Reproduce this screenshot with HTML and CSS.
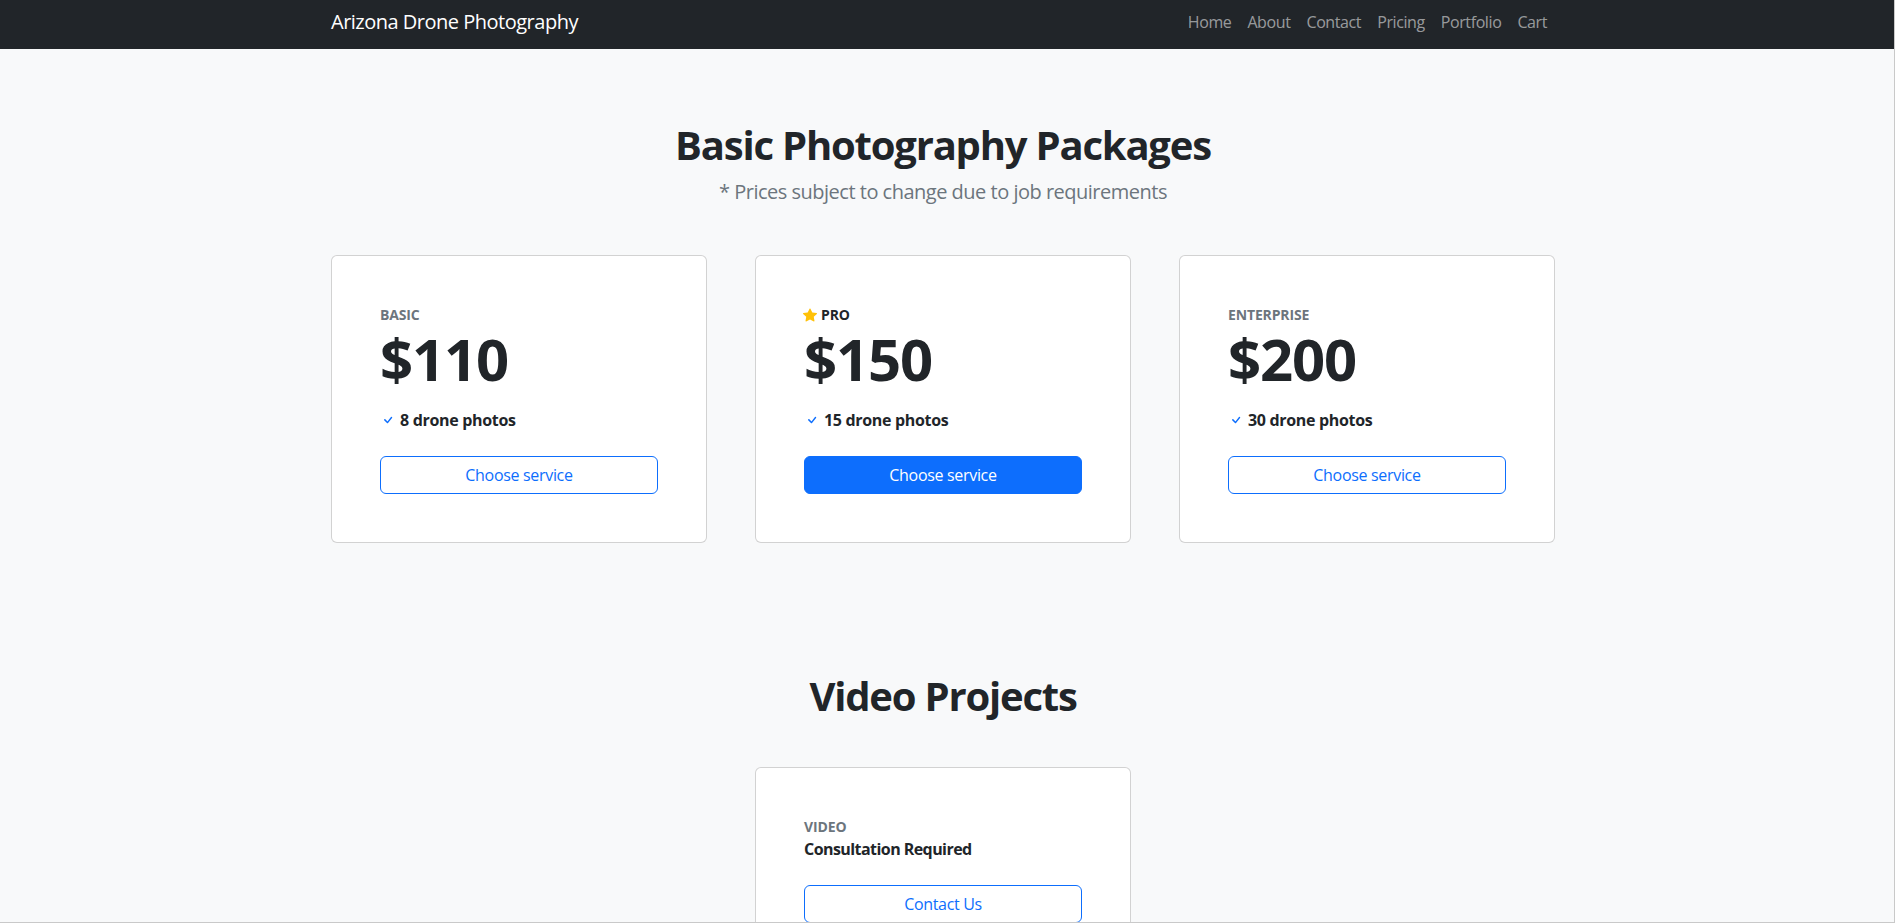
FILE: index.html
```html
<!DOCTYPE html>
<html lang="en">
<head>
<meta charset="utf-8">
<title>Arizona Drone Photography - Pricing</title>
<link rel="stylesheet" href="styles.css">
</head>
<body>
<nav class="navbar">
  <div class="container nav-inner">
    <a class="brand" href="#">Arizona Drone Photography</a>
    <ul class="nav-links">
      <li><a href="#">Home</a></li>
      <li><a href="#">About</a></li>
      <li><a href="#">Contact</a></li>
      <li><a href="#">Pricing</a></li>
      <li><a href="#">Portfolio</a></li>
      <li><a href="#">Cart</a></li>
    </ul>
  </div>
</nav>
<main>
  <section class="section pricing">
    <div class="container">
      <header class="section-head">
        <h1 class="section-title">Basic Photography Packages</h1>
        <p class="lead">* Prices subject to change due to job requirements</p>
      </header>
      <div class="card-grid">
        <div class="card">
          <div class="tier">Basic</div>
          <div class="price">$110</div>
          <div class="feature"><svg class="check" viewBox="0 0 16 16" width="16" height="16"><path d="M10.97 4.97a.75.75 0 0 1 1.07 1.05l-3.99 4.99a.75.75 0 0 1-1.08.02L4.324 8.384a.75.75 0 1 1 1.06-1.06l2.094 2.093 3.473-4.425z"/></svg><span>8 drone photos</span></div>
          <a class="btn btn-outline" href="#">Choose service</a>
        </div>
        <div class="card">
          <div class="tier tier-pro"><svg class="star" viewBox="0 0 16 16" width="14" height="14"><path d="M3.612 15.443c-.386.198-.824-.149-.746-.592l.83-4.73L.173 6.765c-.329-.314-.158-.888.283-.95l4.898-.696L7.538.792c.197-.39.73-.39.927 0l2.184 4.327 4.898.696c.441.062.612.636.282.95l-3.522 3.356.83 4.730c.078.443-.36.79-.746.592L8 13.187l-4.389 2.256z"/></svg><span>Pro</span></div>
          <div class="price">$150</div>
          <div class="feature"><svg class="check" viewBox="0 0 16 16" width="16" height="16"><path d="M10.97 4.97a.75.75 0 0 1 1.07 1.05l-3.99 4.99a.75.75 0 0 1-1.08.02L4.324 8.384a.75.75 0 1 1 1.06-1.06l2.094 2.093 3.473-4.425z"/></svg><span>15 drone photos</span></div>
          <a class="btn btn-primary" href="#">Choose service</a>
        </div>
        <div class="card">
          <div class="tier">Enterprise</div>
          <div class="price">$200</div>
          <div class="feature"><svg class="check" viewBox="0 0 16 16" width="16" height="16"><path d="M10.97 4.97a.75.75 0 0 1 1.07 1.05l-3.99 4.99a.75.75 0 0 1-1.08.02L4.324 8.384a.75.75 0 1 1 1.06-1.06l2.094 2.093 3.473-4.425z"/></svg><span>30 drone photos</span></div>
          <a class="btn btn-outline" href="#">Choose service</a>
        </div>
      </div>
    </div>
  </section>
  <section class="section video">
    <div class="container">
      <h2 class="section-title video-title">Video Projects</h2>
      <div class="card-grid">
        <div class="card card-center">
          <div class="tier">Video</div>
          <div class="consult">Consultation Required</div>
          <a class="btn btn-outline" href="#">Contact Us</a>
        </div>
      </div>
    </div>
  </section>
</main>
</body>
</html>
```
FILE: styles.css
```css
* { box-sizing: border-box; }

html, body {
  margin: 0;
  padding: 0;
}

body {
  background: #f8f9fa;
  color: #212529;
  font-family: "Open Sans", "Noto Sans", "Liberation Sans", sans-serif;
  font-size: 16px;
  line-height: 1.5;
}

body::after {
  content: "";
  position: fixed;
  inset: 0;
  border-right: 1px solid #c9c9c9;
  border-bottom: 1px solid #c9c9c9;
  pointer-events: none;
}

a { text-decoration: none; }

.container {
  width: 1224px;
  margin-left: calc(50% - 616.5px);
  margin-right: auto;
}

/* Navbar */
.navbar {
  background: #212529;
  height: 49px;
  padding-bottom: 6px;
  display: flex;
}

.nav-inner {
  display: flex;
  align-items: center;
  justify-content: space-between;
}

.brand {
  color: #fff;
  font-size: 20px;
  line-height: 30px;
  letter-spacing: -0.025em;
}

.nav-links {
  list-style: none;
  margin: 0;
  padding: 0;
  display: flex;
}

.nav-links a {
  display: block;
  padding: 0 8px;
  color: rgba(255, 255, 255, 0.55);
  font-size: 16px;
  line-height: 24px;
  letter-spacing: -0.025em;
}

/* Sections */
.section { padding-top: 72px; }
.pricing { padding-bottom: 57px; }

.section-head {
  text-align: center;
  margin-bottom: 48px;
}

.section-title {
  margin: 0 0 8px;
  font-size: 40px;
  line-height: 48px;
  font-weight: 700;
  text-align: center;
  letter-spacing: -0.03em;
}

.video-title { margin-bottom: 47px; }

.lead {
  margin: 0;
  font-size: 20px;
  line-height: 30px;
  font-weight: 400;
  color: #6c757d;
  letter-spacing: -0.025em;
}

/* Cards */
.card-grid {
  display: grid;
  grid-template-columns: repeat(3, 376px);
  column-gap: 48px;
}

.card {
  background: #fff;
  border: 1px solid rgba(0, 0, 0, 0.175);
  border-radius: 6px;
  padding: 48px;
  display: flex;
  flex-direction: column;
}

.card-center { grid-column: 2; }

.tier {
  display: flex;
  align-items: center;
  height: 21px;
  font-size: 14px;
  line-height: 21px;
  font-weight: 700;
  text-transform: uppercase;
  color: #6c757d;
  letter-spacing: -0.01em;
}

.tier-pro { color: #212529; }

.star {
  fill: #ffc107;
  margin: 0 4px 0 -1px;
  flex: none;
}

.price {
  font-size: 58px;
  line-height: 68px;
  font-weight: 700;
  letter-spacing: -0.02em;
  margin-bottom: 15px;
}

.feature {
  display: flex;
  align-items: center;
  height: 24px;
  font-weight: 700;
  font-size: 16px;
  line-height: 24px;
  letter-spacing: -0.02em;
  margin-bottom: 24px;
}

.check {
  fill: #0d6efd;
  margin-right: 4px;
  flex: none;
}

.consult {
  font-weight: 700;
  font-size: 16px;
  line-height: 24px;
  letter-spacing: -0.035em;
  margin-bottom: 24px;
}

.btn {
  display: block;
  text-align: center;
  border: 1px solid #0d6efd;
  border-radius: 6px;
  padding: 6px 12px;
  font-size: 16px;
  line-height: 24px;
  letter-spacing: -0.02em;
}

.btn-outline {
  color: #0d6efd;
  background: transparent;
}

.btn-primary {
  color: #fff;
  background: #0d6efd;
}
```
